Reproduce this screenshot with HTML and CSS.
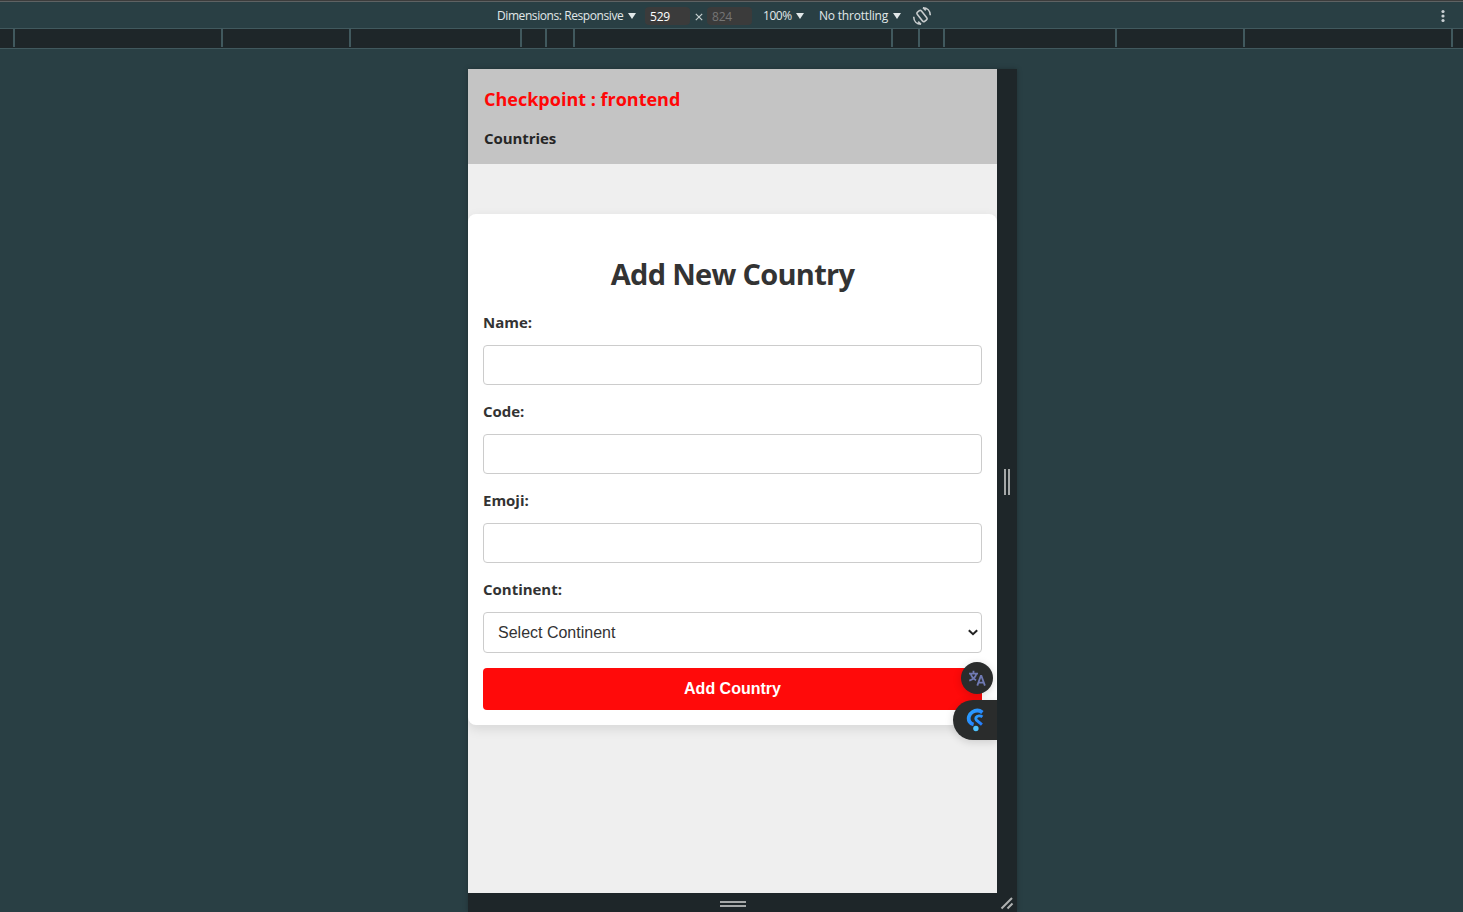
FILE: index.html
```html
<!DOCTYPE html>
<html lang="en">
<head>
<meta charset="utf-8">
<title>Checkpoint : frontend</title>
<link rel="stylesheet" href="styles.css">
</head>
<body>
<div class="toolbar">
  <span class="tool dimensions"><span class="t-dim">Dimensions: Responsive</span><i class="caret"></i></span>
  <span class="size">529</span>
  <svg class="times" width="8" height="8" viewBox="0 0 8 8"><path d="M.8.8l6.4 6.4M7.2.8L.8 7.2" stroke="#c5cfd0" stroke-width="1.2"/></svg>
  <span class="size size-dim">824</span>
  <span class="tool zoom"><span class="t-zoom">100%</span><i class="caret"></i></span>
  <span class="tool throttle"><span class="t-throttle">No throttling</span><i class="caret"></i></span>
  <svg class="rotate" width="20" height="20" viewBox="0 0 20 20" fill="none" stroke="#c7cccd" stroke-width="1.600"><rect x="7.300" y="4.200" width="5.400" height="11.600" rx="1.500" transform="rotate(-38 10 10)"/><path d="M11 1.700c4.200 0 7.200 3 7.300 7.500M11 1.700l2.800 2.700M9 18.300c-4.200 0-7.200-3-7.300-7.500M9 18.300l-2.800-2.700"/></svg>
  <svg class="more" width="4" height="14" viewBox="0 0 4 14" fill="#c9d0d4"><circle cx="2" cy="2.500" r="1.600"/><circle cx="2" cy="7" r="1.600"/><circle cx="2" cy="11.500" r="1.600"/></svg>
</div>
<div class="ruler"><i></i><i></i><i></i><i></i><i></i><i></i><i></i><i></i><i></i><i></i><i></i><i></i></div>
<main class="stage">
  <div class="device">
    <div class="page">
      <header class="header">
        <div class="brand">Checkpoint : frontend</div>
        <div class="nav">Countries</div>
      </header>
      <form class="card">
        <h1 class="title">Add New Country</h1>
        <label class="label" for="name">Name:</label>
        <input class="field" id="name">
        <label class="label" for="code">Code:</label>
        <input class="field" id="code">
        <label class="label" for="emoji">Emoji:</label>
        <input class="field" id="emoji">
        <label class="label" for="continent">Continent:</label>
        <div class="field select" id="continent"><span>Select Continent</span>
          <svg width="10" height="7" viewBox="0 0 10 7" fill="none" stroke="#222" stroke-width="2"><path d="M.8 1.200L5 5.200l4.200-4"/></svg>
        </div>
        <button class="submit" type="button">Add Country</button>
      </form>
      <div class="bubble translate">
        <svg width="18" height="18" viewBox="0 0 18 18" fill="none" stroke="#6f79b3" stroke-width="1.800"><path d="M1 4.700h9M5.500 1.800v2.900M2.800 5c.8 3 2.700 5 5.300 6.200M8.300 5C7.500 8 5.200 10.300 1.300 11.700"/><path d="M9.300 16.600l3.500-9.600h.6l3.500 9.600M10.500 13.600h5.200"/></svg>
      </div>
      <div class="bubble assist">
        <svg width="20" height="24" viewBox="0 0 20 24" fill="none">
          <defs><linearGradient id="blue" x1="0" y1="0" x2="1" y2="1"><stop offset="0" stop-color="#2aa0ff"/><stop offset="1" stop-color="#2379ff"/></linearGradient></defs>
          <path d="M17.400 4.400C14.700 2.300 10.700 2 7.500 4 4 6.200 2.700 10.600 4.600 13.800c.9 1.500 2.200 2.300 4 2.700" stroke="url(#blue)" stroke-width="3.800"/>
          <path d="M17.400 8.800C15.400 7.300 12.300 7.700 11 9.600c-.5.900-.2 1.800.5 2.500l5.400 4.600" stroke="url(#blue)" stroke-width="2.900"/>
          <circle cx="10.900" cy="20.500" r="2.700" fill="#4fc3ff"/>
        </svg>
      </div>
    </div>
    <div class="grip grip-right"><i></i><i></i></div>
    <div class="grip grip-bottom"><i></i><i></i></div>
    <div class="grip-corner"><svg width="14" height="14" viewBox="0 0 14 14" stroke="#aeb1b1" stroke-width="2"><path d="M1.500 12.500L12 2M7.500 12.500l5-5"/></svg></div>
  </div>
</main>
</body>
</html>
```
FILE: styles.css
```css
* { box-sizing: border-box; }
body {
  margin: 0;
  width: 1463px;
  height: 912px;
  overflow: hidden;
  display: flex;
  flex-direction: column;
  background: #293f44;
  font-family: "Open Sans", "Noto Sans", sans-serif;
}
span { white-space: nowrap; }
.toolbar {
  height: 29px;
  flex: none;
  display: flex;
  align-items: center;
  padding: 2px 18px 0 497px;
  border-top: 1px solid #3c3c3c;
  border-bottom: 1px solid #41595e;
  box-shadow: inset 0 1px #5e6263;
  color: #e1e8e9;
  font-size: 12px;
  line-height: 20px;
}
.tool { display: flex; align-items: center; justify-content: space-between; flex: none; }
.dimensions { width: 139px; margin-right: 9px; }
.zoom { width: 41px; margin: 0 15px 0 11px; }
.throttle { width: 82px; margin-right: 11px; }
.t-dim { letter-spacing: -.42px; }
.t-zoom { letter-spacing: -.45px; }
.t-throttle { letter-spacing: -.2px; }
.caret {
  flex: none;
  border: 4px solid transparent;
  border-top: 6px solid #e1e8e9;
  border-bottom: 0;
}
.size {
  width: 45px;
  height: 18px;
  flex: none;
  padding-left: 5px;
  border-radius: 4px;
  background: #3b3b3b;
  color: #fff;
  letter-spacing: -.2px;
}
.size-dim { color: #757575; }
.times { margin: 3px 4px 0 5px; flex: none; }
.rotate { flex: none; }
.more { margin-left: auto; flex: none; }
.ruler {
  height: 20px;
  flex: none;
  display: flex;
  background: #1e2629;
  border-bottom: 1px solid #41595e;
}
.ruler i { height: 18px; flex: none; border-right: 2px solid #41595e; }
.ruler i:nth-child(1) { width: 15px; }
.ruler i:nth-child(2), .ruler i:nth-child(12) { width: 208px; }
.ruler i:nth-child(3), .ruler i:nth-child(11) { width: 128px; }
.ruler i:nth-child(4) { width: 171px; }
.ruler i:nth-child(5), .ruler i:nth-child(9) { width: 25px; }
.ruler i:nth-child(6) { width: 28px; }
.ruler i:nth-child(7) { width: 318px; }
.ruler i:nth-child(8) { width: 27px; }
.ruler i:nth-child(10) { width: 172px; }
.stage { flex: 1; padding: 20px 0 0 468px; }
.device {
  width: 549px;
  display: grid;
  grid-template: 824px 19px / 529px 20px;
  background: #1e2629;
  box-shadow: 0 0 5px rgba(0, 0, 0, .25);
}
.page { position: relative; background: #efefef; overflow: hidden; color: #333; }
.header { height: 95px; padding: 16px; background: #c4c4c4; margin-bottom: 50px; }
.brand { color: #ff0707; font-size: 18px; font-weight: 700; line-height: 28px; }
.nav { margin-top: 13px; color: #262626; font-size: 15px; font-weight: 700; line-height: 24px; letter-spacing: -.08px; }
.card {
  height: 511px;
  padding: 40px 15px 15px;
  display: flex;
  flex-direction: column;
  border-radius: 8px;
  background: #fff;
  box-shadow: 0 4px 12px rgba(0, 0, 0, .1);
}
.title {
  margin: 0 0 19px;
  font-size: 29px;
  line-height: 40px;
  font-weight: 700;
  text-align: center;
  letter-spacing: -.7px;
}
.label {
  height: 20px;
  margin: -1px 0 13px;
  font-size: 15px;
  line-height: 20px;
  font-weight: 700;
  letter-spacing: -.02px;
}
.field {
  width: 100%;
  height: 40px;
  flex: none;
  margin: 0 0 17px;
  border: 1px solid #ccc;
  border-radius: 4px;
  background: #fff;
}
.select {
  height: 41px;
  margin-bottom: 15px;
  padding: 0 3px 0 14px;
  display: flex;
  align-items: center;
  justify-content: space-between;
  font: 16px "Liberation Sans", sans-serif;
}
.submit {
  height: 42px;
  flex: none;
  padding: 0;
  border: 0;
  border-radius: 4px;
  background: #ff0a0a;
  color: #fff;
  font: 700 16px "Liberation Sans", sans-serif;
}
.bubble {
  position: absolute;
  display: flex;
  align-items: center;
  justify-content: center;
  background: #2a2c2c;
  box-shadow: 0 2px 8px rgba(0, 0, 0, .15);
}
.translate { top: 593px; right: 4px; width: 32px; height: 32px; border-radius: 50%; }
.assist { top: 631px; right: 0; width: 44px; height: 40px; border-radius: 20px 0 0 20px; }
.grip { display: flex; align-items: center; justify-content: center; gap: 2px; }
.grip i { background: #a5a8a8; }
.grip-right { padding-top: 2px; }
.grip-right i { width: 2px; height: 26px; }
.grip-bottom { flex-direction: column; padding-top: 3px; }
.grip-bottom i { width: 26px; height: 2px; }
.grip-corner { display: flex; align-items: flex-end; justify-content: flex-end; padding: 0 3px 2px 0; }
```
